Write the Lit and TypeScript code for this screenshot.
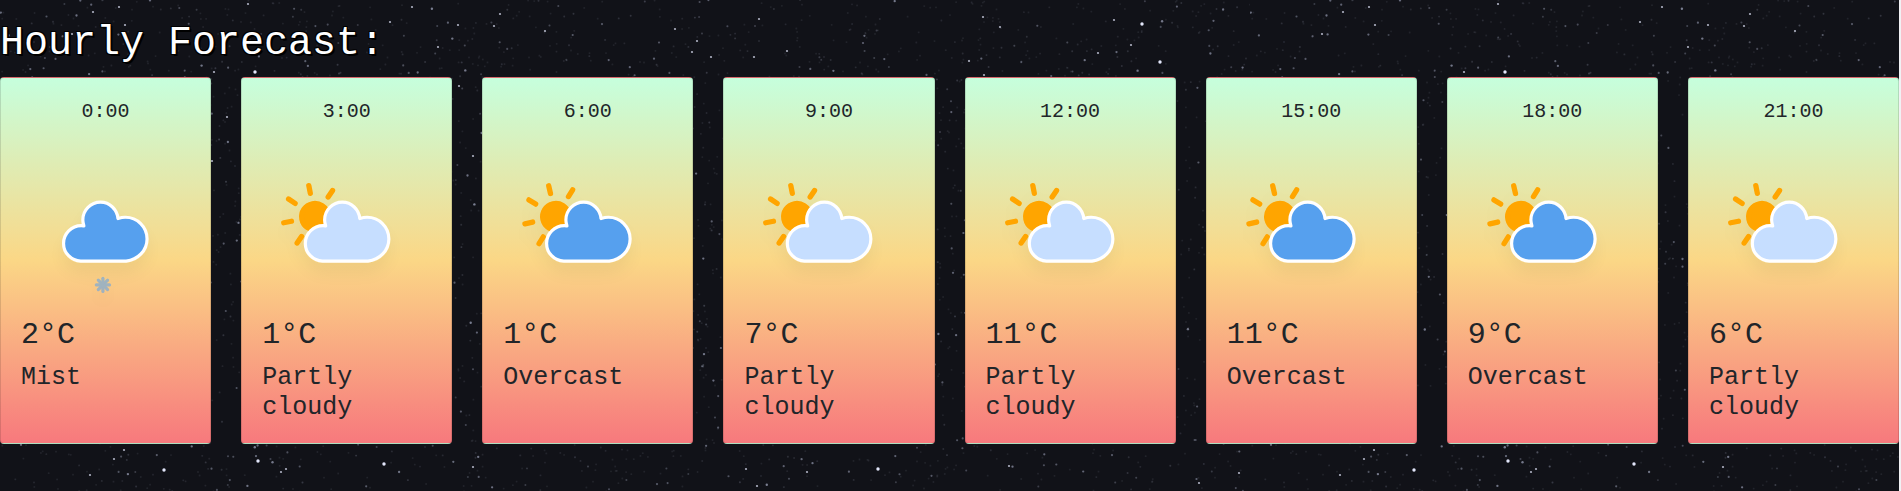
import { LitElement, html, svg, css } from "lit";
import { customElement, property } from "lit/decorators.js";

type Icon = "mist" | "partly" | "overcast";

interface Hour {
  time: string;
  temp: number;
  text: string;
  icon: Icon;
}

const HOURS: Hour[] = [
  { time: "0:00", temp: 2, text: "Mist", icon: "mist" },
  { time: "3:00", temp: 1, text: "Partly cloudy", icon: "partly" },
  { time: "6:00", temp: 1, text: "Overcast", icon: "overcast" },
  { time: "9:00", temp: 7, text: "Partly cloudy", icon: "partly" },
  { time: "12:00", temp: 11, text: "Partly cloudy", icon: "partly" },
  { time: "15:00", temp: 11, text: "Overcast", icon: "overcast" },
  { time: "18:00", temp: 9, text: "Overcast", icon: "overcast" },
  { time: "21:00", temp: 6, text: "Partly cloudy", icon: "partly" },
];

const CLOUD =
  "M47.7,35.4c0-4.6-3.7-8.2-8.2-8.2c-1,0-1.9,0.2-2.8,0.5c-0.3-3.4-3.1-6.2-6.6-6.2c-3.7,0-6.7,3-6.7,6.7c0,0.8,0.2,1.6,0.4,2.3c-0.3-0.1-0.7-0.1-1-0.1c-3.7,0-6.7,3-6.7,6.7c0,3.6,2.9,6.6,6.5,6.7l17.2,0C44.2,43.3,47.7,39.8,47.7,35.4z";

@customElement("weather-icon")
export class WeatherIcon extends LitElement {
  @property() kind: Icon = "partly";

  static styles = css`
    :host {
      display: block;
    }
    svg {
      display: block;
      width: 100%;
    }
    .sun {
      fill: orange;
      stroke: orange;
      stroke-width: 2;
      stroke-linecap: round;
    }
    .cloud {
      stroke: #fff;
      stroke-width: 1.2;
      stroke-linejoin: round;
      fill: #57a0ee;
    }
    .light {
      fill: #c6deff;
    }
    .flake {
      stroke: #57a0ee;
      stroke-width: 1.2;
      stroke-linecap: round;
      opacity: 0.55;
    }
  `;

  private sun(angle: number) {
    return svg`<g class="sun" transform="translate(20,26) rotate(${angle})">
      ${[0, 45, 90, 135, 180, 225, 270, 315].map(
        (a) => svg`<line y1="9" y2="12" transform="rotate(${a})" />`
      )}
      <circle r="5" />
    </g>`;
  }

  private flake() {
    return svg`<g class="flake" transform="translate(31,51.8)">
      ${[0, 45, 90, 135].map(
        (a) => svg`<line y1="-2.5" y2="2.5" transform="rotate(${a})" />`
      )}
    </g>`;
  }

  render() {
    const shift = { mist: 0, partly: 0.3, overcast: 0.4 }[this.kind];
    return html`<svg viewBox="0 0 64 64" aria-hidden="true">
      <defs>
        <filter id="shade" x="-30%" y="-30%" width="160%" height="180%">
          <feGaussianBlur in="SourceAlpha" stdDeviation="3" />
          <feOffset dy="4" result="offset" />
          <feComponentTransfer>
            <feFuncA type="linear" slope="0.05" />
          </feComponentTransfer>
          <feMerge>
            <feMergeNode />
            <feMergeNode in="SourceGraphic" />
          </feMerge>
        </filter>
      </defs>
      <g filter="url(#shade)">
        ${this.kind === "mist" ? this.flake() : this.sun(this.kind === "partly" ? -11 : -13)}
        <path
          class="cloud ${this.kind === "partly" ? "light" : ""}"
          transform="translate(${shift},-1)"
          d=${CLOUD}
        />
      </g>
    </svg>`;
  }
}

const BRIGHT = [
  [983, 17], [1131, 45], [1098, 53], [692, 52], [711, 57], [545, 31], [500, 14],
  [494, 26], [438, 47], [458, 25], [759, 19], [787, 51], [754, 57], [697, 41],
  [675, 29], [1114, 20], [1000, 27], [969, 61], [984, 75], [248, 4], [93, 12],
  [119, 7], [125, 25], [72, 34], [214, 72], [412, 7], [390, 22], [227, 117],
  [212, 161], [473, 156], [459, 86], [124, 450], [114, 459], [286, 469],
  [281, 472], [473, 467], [746, 469], [807, 472], [757, 486], [1009, 466],
  [1239, 473], [1199, 483], [90, 475],
];

const BRIGHTEST = [[1160, 62], [1142, 24], [255, 72], [164, 470], [258, 461], [384, 464], [878, 469]];

/** Night sky: a repeating tile of faint seeded stars with a set of bright ones. */
@customElement("star-field")
export class StarField extends LitElement {
  static styles = css`
    :host {
      display: block;
      overflow: hidden;
      background: #111218;
    }
    svg {
      display: block;
      width: 100%;
      height: 100%;
    }
    .star {
      fill: #b4bad4;
    }
    .bright {
      fill: #e2e6fa;
    }
  `;

  private faint() {
    let seed = 20117;
    const rnd = () => {
      seed = (seed * 1664525 + 1013904223) % 4294967296;
      return seed / 4294967296;
    };
    return Array.from({ length: 7500 }, () => {
      const x = (rnd() * 1250).toFixed(1);
      const y = (rnd() * 1000).toFixed(1);
      const m = rnd() ** 7;
      return svg`<circle class="star" cx=${x} cy=${y} r=${(0.9 + m * 0.3).toFixed(2)}
        opacity=${(0.1 + m * 0.55).toFixed(2)} />`;
    });
  }

  render() {
    return html`<svg aria-hidden="true">
      <defs>
        <pattern id="tile" width="1250" height="1000" patternUnits="userSpaceOnUse">
          ${this.faint()}
          ${BRIGHT.map(([x, y]) => svg`<circle class="bright" cx=${x} cy=${y} r="1.1" opacity="0.75" />`)}
          ${BRIGHTEST.map(([x, y]) => svg`<circle class="bright" cx=${x} cy=${y} r="1.7" />`)}
        </pattern>
      </defs>
      <rect width="100%" height="100%" fill="url(#tile)" />
    </svg>`;
  }
}

@customElement("app-root")
export class AppRoot extends LitElement {
  static styles = css`
    :host {
      display: block;
      position: relative;
      min-height: 100vh;
      box-sizing: border-box;
      padding: 20px 0 47px;
      border-right: 2px solid #f1f1f4;
      overflow: hidden;
      font-family: "Courier New", "Liberation Mono", monospace;
      color: #212529;
    }
    .sky {
      position: absolute;
      inset: 0;
    }
    .forecast {
      position: relative;
    }
    .title {
      margin: 0 0 9px;
      font-size: 40px;
      line-height: 48px;
      font-weight: 400;
      color: #fff;
      text-shadow: -1px -1px 0 #000, 1px -1px 0 #000, -1px 1px 0 #000,
        1px 1px 0 #000, 2px 2px 0 #000;
    }
    .cards {
      display: grid;
      grid-template-columns: repeat(8, minmax(0, 1fr));
      gap: 30px;
      margin: 0;
      padding: 0;
      list-style: none;
    }
    .card {
      padding: 22px 20px 20px;
      border: 1px solid rgba(0, 0, 0, 0.125);
      border-radius: 4px;
      background-image: linear-gradient(#c6ffdd, #fbd786, #f7797d);
    }
    .time {
      margin: 0 0 24px;
      font-size: 20px;
      line-height: 24px;
      font-weight: 400;
      text-align: center;
    }
    .temp {
      margin: 0 0 10px;
      font-size: 30px;
      line-height: 36px;
    }
    .text {
      margin: 0;
      font-size: 25px;
      line-height: 30px;
    }
  `;

  render() {
    return html`
      <star-field class="sky"></star-field>
      <section class="forecast">
        <h1 class="title">Hourly Forecast:</h1>
        <ul class="cards">
          ${HOURS.map(
            (h) => html`<li class="card">
              <h2 class="time">${h.time}</h2>
              <weather-icon kind=${h.icon}></weather-icon>
              <p class="temp">${h.temp}°C</p>
              <p class="text">${h.text}</p>
            </li>`
          )}
        </ul>
      </section>
    `;
  }
}
